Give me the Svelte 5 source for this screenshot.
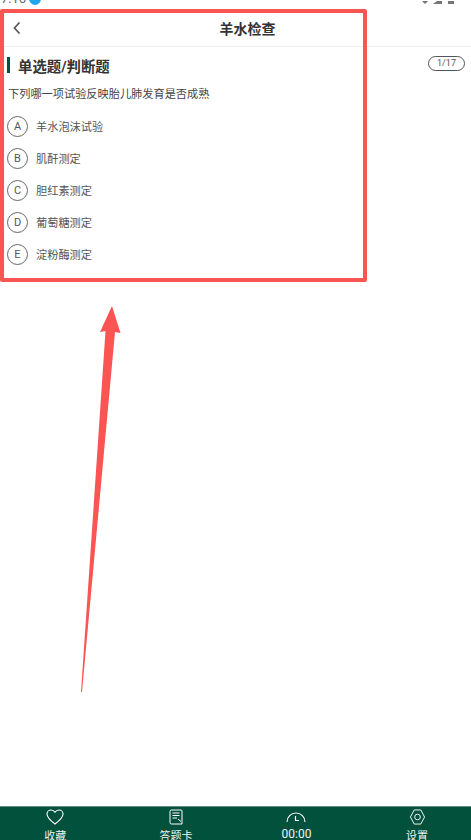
<script>
const options = [
  { key: 'A', text: '羊水泡沫试验' },
  { key: 'B', text: '肌酐测定' },
  { key: 'C', text: '胆红素测定' },
  { key: 'D', text: '葡萄糖测定' },
  { key: 'E', text: '淀粉酶测定' }
];
</script>

<div class="page">
  <div class="status">
    <div class="status-left">
      <span class="time">7:16</span>
      <span class="dot"></span>
    </div>
    <div class="status-right">
      <svg width="33" height="4" viewBox="0 0 33 4">
        <path d="M3 3 L0 0 H6 Z" fill="#777" />
        <path d="M11 3 L20 3 L20 0 L15 0 Z" fill="#777" />
        <rect x="26" y="0" width="6" height="3" fill="#777" />
      </svg>
    </div>
  </div>

  <header class="nav">
    <svg class="back" width="10" height="14" viewBox="0 0 10 14">
      <path d="M7.5 1.5 L2.5 7 L7.5 12.5" fill="none" stroke="#555" stroke-width="1.7" />
    </svg>
    <h1>羊水检查</h1>
  </header>

  <main class="content">
    <div class="type-row">
      <span class="bar"></span>
      <h2>单选题/判断题</h2>
      <span class="count">1/17</span>
    </div>
    <p class="question">下列哪一项试验反映胎儿肺发育是否成熟</p>
    <ul>
      {#each options as o}
        <li>
          <span class="key">{o.key}</span>
          <span class="label">{o.text}</span>
        </li>
      {/each}
    </ul>
  </main>

  <footer class="tabs">
    <div class="tab">
      <svg width="18" height="16" viewBox="0 0 18 16">
        <path d="M9 15 C5 12 1 9 1 5 C1 2.500 3 1 5 1 C6.800 1 8.200 2 9 3.300 C9.800 2 11.200 1 13 1 C15 1 17 2.500 17 5 C17 9 13 12 9 15 Z" fill="none" stroke="#fff" stroke-width="1.100" />
      </svg>
      <span>收藏</span>
    </div>
    <div class="tab">
      <svg width="14" height="16" viewBox="0 0 14 16">
        <path d="M2.500 1 H12 A1 1 0 0 1 13 2 V15 H2.500 A1.500 1.500 0 0 1 1 13.500 V2.500 A1.500 1.500 0 0 1 2.500 1 Z" fill="none" stroke="#fff" stroke-width="1" />
        <path d="M3.500 4 H10.500 M3.500 6.500 H10.500 M3.500 9 H8 M9 10 L12 12.500" fill="none" stroke="#fff" stroke-width="1" />
      </svg>
      <span>答题卡</span>
    </div>
    <div class="tab">
      <svg width="20" height="16" viewBox="0 0 20 16">
        <path d="M1 13 A9 9 0 0 1 19 13" fill="none" stroke="#fff" stroke-width="1.100" />
        <path d="M9.500 7 V11.500 H13" fill="none" stroke="#fff" stroke-width="1.200" />
      </svg>
      <span class="clock">00:00</span>
    </div>
    <div class="tab">
      <svg width="17" height="16" viewBox="0 0 17 17">
        <path d="M5 1 H12 L16 8.500 L12 16 H5 L1 8.500 Z" fill="none" stroke="#fff" stroke-width="1" stroke-linejoin="round" />
        <circle cx="8.500" cy="8.500" r="3" fill="none" stroke="#fff" stroke-width="1" />
      </svg>
      <span>设置</span>
    </div>
  </footer>

  <!-- red annotation drawn over the screenshot -->
  <div class="mark"></div>
  <svg class="arrow" width="471" height="840" viewBox="0 0 471 840">
    <path d="M112 306 L120.500 333 L115 332 L82 692 L81 692 L105.500 331 L100 332 Z" fill="#fa5453" />
  </svg>
</div>

<style>
:global(body) {
  background: #fff;
}

.page {
  position: relative;
  width: 471px;
  height: 840px;
  overflow: hidden;
  display: flex;
  flex-direction: column;
  font-family: "Roboto", "Noto Sans CJK SC", sans-serif;
  background: #fff;
}

.status {
  height: 9px;
  display: flex;
  justify-content: space-between;
  overflow: hidden;
}

.status-left {
  display: flex;
  align-items: flex-end;
  gap: 3px;
  margin-top: -8px;
  height: 13px;
  padding-left: 1px;
}

.time {
  font-size: 13px;
  line-height: 13px;
  color: #666;
}

.dot {
  width: 12px;
  height: 13px;
  border-radius: 50%;
  background: #1fa8f0;
}

.status-right {
  padding-right: 16px;
  line-height: 0;
}

.nav {
  height: 37px;
  display: flex;
  align-items: center;
  justify-content: center;
  position: relative;
  padding-left: 24px;
  border-bottom: 1px solid #eee;
}

.back {
  position: absolute;
  left: 12px;
  top: 12px;
}

h1 {
  margin: 0;
  font-size: 14px;
  font-weight: 700;
  color: #333;
}

.content {
  flex: 1;
  padding: 6px 6px 0 7px;
}

.type-row {
  display: flex;
  align-items: center;
  height: 24px;
}

.bar {
  width: 3px;
  height: 16px;
  background: #02513d;
  margin-right: 8px;
}

h2 {
  margin: 0;
  font-size: 14.4px;
  font-weight: 700;
  color: #333;
  flex: 1;
}

.count {
  width: 37px;
  height: 15px;
  box-sizing: border-box;
  border: 1px solid #555;
  border-radius: 8px;
  font-size: 9px;
  line-height: 13px;
  text-align: center;
  color: #555;
  margin-top: -4px;
}

.question {
  margin: 9px 0 6px 1px;
  font-size: 11.2px;
  line-height: 18px;
  color: #444;
}

ul {
  list-style: none;
  margin: 0;
  padding: 0;
}

li {
  display: flex;
  align-items: center;
  height: 32px;
}

.key {
  width: 21px;
  height: 21px;
  box-sizing: border-box;
  border: 1px solid #666;
  border-radius: 50%;
  font-size: 11px;
  line-height: 19px;
  text-align: center;
  color: #555;
  margin-right: 8px;
}

.label {
  font-size: 11.2px;
  color: #555;
}

.tabs {
  height: 33px;
  flex: none;
  display: grid;
  grid-template-columns: repeat(4, 120.6px);
  margin-left: -5px;
  width: 482px;
  background: #02513d;
  border-top: 1px solid #5b8c7e;
  overflow: hidden;
}

.tab {
  display: flex;
  flex-direction: column;
  align-items: center;
  gap: 5px;
  padding-top: 2px;
  color: #eef4f2;
  font-size: 11px;
  line-height: 13px;
}

.clock {
  margin-top: -2px;
  font-size: 12px;
}

.mark {
  position: absolute;
  left: 0;
  top: 9px;
  width: 367px;
  height: 273px;
  box-sizing: border-box;
  border: 4px solid #fa5453;
  border-radius: 2px;
}

.arrow {
  position: absolute;
  left: 0;
  top: 0;
  pointer-events: none;
}
</style>
